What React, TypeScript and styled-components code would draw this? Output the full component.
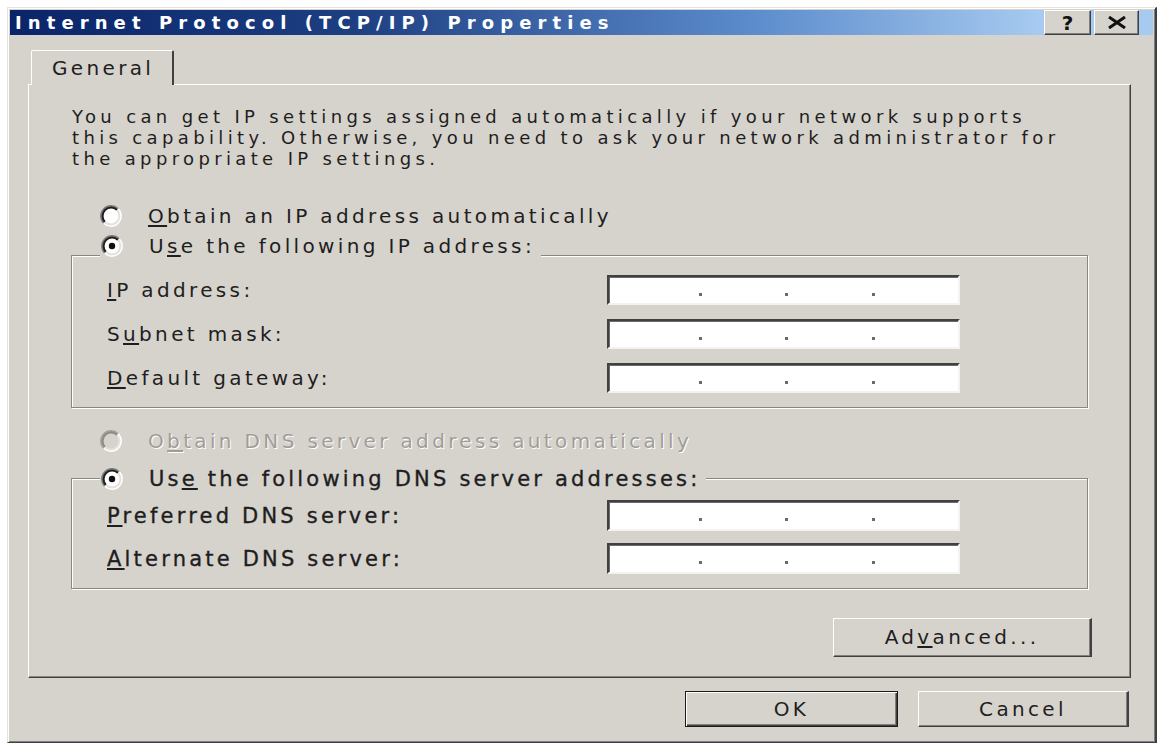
import styled, { createGlobalStyle, css } from "styled-components";

const face = "#d6d3cd";
const ink = "#1e1e1e";

const GlobalStyle = createGlobalStyle`
  html, body {
    margin: 0;
    padding: 0;
    background: #ffffff;
  }
  body {
    font-family: "DejaVu Sans", Verdana, sans-serif;
    color: ${ink};
  }
  #root {
    width: 1160px;
    height: 748px;
    overflow: hidden;
  }
`;

const textSize = (big?: boolean) => css`
  font-size: ${big ? 21 : 20}px;
  letter-spacing: ${big ? 3.2 : 3.35}px;
  line-height: ${big ? 20 : 19}px;
  ${big && "-webkit-text-stroke: 0.35px #1e1e1e;"}
`;

const Radio = ({ checked, disabled }: { checked?: boolean; disabled?: boolean }) => (
  <svg width="22" height="22" viewBox="0 0 22 22" style={{ flex: "none" }}>
    <circle cx="11" cy="11" r="8.5" fill={disabled ? face : "#ffffff"} />
    <path d="M3.93 18.07 A10 10 0 0 1 18.07 3.93" stroke={disabled ? "#a3a09b" : "#7a7a7a"} strokeWidth="2" fill="none" />
    <path d="M4.99 17.01 A8.5 8.5 0 0 1 17.01 4.99" stroke={disabled ? "#8f8c87" : "#202020"} strokeWidth="2" fill="none" />
    <path d="M18.07 3.93 A10 10 0 0 1 3.93 18.07" stroke="#ffffff" strokeWidth="2" fill="none" />
    <path d="M17.01 4.99 A8.5 8.5 0 0 1 4.99 17.01" stroke="#e4e1dc" strokeWidth="2" fill="none" />
    {checked && <circle cx="11" cy="11" r="3.2" fill="#101010" />}
  </svg>
);

const Address = ({ h }: { h: number }) => (
  <IpBox $h={h}>
    <IpPart />
    <IpDot />
    <IpPart />
    <IpDot />
    <IpPart />
    <IpDot />
    <IpPart />
  </IpBox>
);

export default function App() {
  return (
    <>
      <GlobalStyle />
      <Window>
        <TitleBar>
          <Caption>Internet Protocol (TCP/IP) Properties</Caption>
          <TitleButtons>
            <TitleButton $w={47}>?</TitleButton>
            <TitleButton $w={45}>
              <svg width="22" height="13" viewBox="0 0 22 13">
                <path d="M3 1 L19 12 M19 1 L3 12" stroke="#111" strokeWidth="3" />
              </svg>
            </TitleButton>
          </TitleButtons>
        </TitleBar>

        <Body>
          <TabStrip>
            <Tab>General</Tab>
          </TabStrip>

          <Panel>
            <Intro>
              You can get IP settings assigned automatically if your network supports
              <br />
              this capability. Otherwise, you need to ask your network administrator for
              <br />
              the appropriate IP settings.
            </Intro>

            <RadioRow $top={36}>
              <Radio />
              <RadioText>
                <Key>O</Key>btain an IP address automatically
              </RadioText>
            </RadioRow>

            <Group $top={28}>
              <GroupHead $lift={21} $cover={2}>
                <Radio checked />
                <RadioText>
                  U<Key>s</Key>e the following IP address:
                </RadioText>
              </GroupHead>
              <Fields $top={16} $gap={14}>
                <FieldRow>
                  <FieldLabel>
                    <Key>I</Key>P address:
                  </FieldLabel>
                  <Address h={30} />
                </FieldRow>
                <FieldRow>
                  <FieldLabel>
                    S<Key>u</Key>bnet mask:
                  </FieldLabel>
                  <Address h={30} />
                </FieldRow>
                <FieldRow>
                  <FieldLabel>
                    <Key>D</Key>efault gateway:
                  </FieldLabel>
                  <Address h={30} />
                </FieldRow>
              </Fields>
            </Group>

            <RadioRow $top={22}>
              <Radio disabled />
              <RadioText $disabled>
                O<Key>b</Key>tain DNS server address automatically
              </RadioText>
            </RadioRow>

            <Group $top={26}>
              <GroupHead $lift={11} $cover={0}>
                <Radio checked />
                <RadioText $big>
                  Us<Key>e</Key> the following DNS server addresses:
                </RadioText>
              </GroupHead>
              <Fields $top={10} $gap={12}>
                <FieldRow>
                  <FieldLabel $big>
                    <Key>P</Key>referred DNS server:
                  </FieldLabel>
                  <Address h={31} />
                </FieldRow>
                <FieldRow>
                  <FieldLabel $big>
                    <Key>A</Key>lternate DNS server:
                  </FieldLabel>
                  <Address h={31} />
                </FieldRow>
              </Fields>
            </Group>

            <ActionRow>
              <PushButton $w={259} $h={39}>
                Ad<Key>v</Key>anced...
              </PushButton>
            </ActionRow>
          </Panel>

          <Footer>
            <PushButton $w={213} $h={36} $default>
              OK
            </PushButton>
            <PushButton $w={211} $h={36}>
              Cancel
            </PushButton>
          </Footer>
        </Body>
      </Window>
    </>
  );
}

const Window = styled.div`
  width: 1150px;
  margin: 7px 0 0 7px;
  box-sizing: border-box;
  padding: 2px;
  background: ${face};
  border: 1px solid;
  border-color: #e6e3de #404040 #404040 #e6e3de;
  border-right-width: 2px;
  box-shadow: inset 1px 1px #ffffff, inset -1px -1px #808080;
  display: flex;
  flex-direction: column;
`;

const TitleBar = styled.div`
  height: 25px;
  display: flex;
  align-items: center;
  justify-content: space-between;
  padding: 0 14px 0 5px;
  background: linear-gradient(to right, #0a246a 0%, #1d3f82 30%, #5c8ccc 65%, #a6caf0 90%);
`;

const Caption = styled.div`
  color: #ffffff;
  font-weight: bold;
  font-size: 18px;
  letter-spacing: 6.1px;
  line-height: 25px;
  white-space: nowrap;
`;

const TitleButtons = styled.div`
  display: flex;
  gap: 3px;
  height: 25px;
`;

const TitleButton = styled.div<{ $w: number }>`
  width: ${(p) => p.$w}px;
  height: 25px;
  box-sizing: border-box;
  display: flex;
  align-items: center;
  justify-content: center;
  background: ${face};
  border: 1px solid;
  border-color: #ffffff #404040 #404040 #ffffff;
  box-shadow: inset -1px -1px #808080;
  color: #111;
  font-weight: bold;
  font-size: 20px;
  line-height: 20px;
`;

const Body = styled.div`
  display: flex;
  flex-direction: column;
  padding: 15px 22px 13px 18px;
`;

const TabStrip = styled.div`
  display: flex;
  padding-left: 3px;
`;

const Tab = styled.div`
  width: 143px;
  height: 35px;
  box-sizing: border-box;
  margin-bottom: -1px;
  display: flex;
  align-items: center;
  padding-left: 20px;
  background: ${face};
  border-top: 1px solid #ffffff;
  border-left: 1px solid #ffffff;
  border-right: 2px solid #404040;
  border-radius: 2px 2px 0 0;
  position: relative;
  z-index: 1;
  ${textSize()}
`;

const Panel = styled.div`
  display: flex;
  flex-direction: column;
  padding: 21px 42px 20px 42px;
  border: 1px solid;
  border-color: #ffffff #404040 #404040 #ffffff;
  box-shadow: inset -1px -1px #8a8782;
`;

const Intro = styled.p`
  margin: 0 0 0 1px;
  white-space: nowrap;
  font-size: 18px;
  letter-spacing: 4.36px;
  line-height: 21px;
`;

const RadioRow = styled.div<{ $top: number }>`
  display: flex;
  align-items: center;
  gap: 26px;
  height: 22px;
  margin: ${(p) => p.$top}px 0 0 29px;
`;

const RadioText = styled.span<{ $big?: boolean; $disabled?: boolean }>`
  white-space: nowrap;
  ${(p) => textSize(p.$big)}
  ${(p) =>
    p.$disabled &&
    css`
      color: #a09d98;
      text-shadow: 1px 1px #ffffff;
    `}
`;

const Key = styled.span`
  text-decoration: underline;
  text-underline-offset: 2px;
`;

const Group = styled.div<{ $top: number }>`
  margin-top: ${(p) => p.$top}px;
  border: 1px solid #8a8782;
  box-shadow: inset 1px 1px #ffffff, 1px 1px #ffffff;
  padding-bottom: 14px;
`;

const GroupHead = styled.div<{ $lift: number; $cover: number }>`
  display: flex;
  align-items: center;
  gap: 26px;
  width: fit-content;
  height: 22px;
  margin: -${(p) => p.$lift}px 0 0 28px;
  padding: 0 6px ${(p) => p.$cover}px 1px;
  background: ${face};
`;

const Fields = styled.div<{ $top: number; $gap: number }>`
  display: flex;
  flex-direction: column;
  gap: ${(p) => p.$gap}px;
  margin-top: ${(p) => p.$top}px;
  padding-left: 35px;
`;

const FieldRow = styled.div`
  display: grid;
  grid-template-columns: 500px 353px;
  align-items: center;
`;

const FieldLabel = styled.span<{ $big?: boolean }>`
  white-space: nowrap;
  ${(p) => textSize(p.$big)}
`;

const IpBox = styled.div<{ $h: number }>`
  height: ${(p) => p.$h}px;
  box-sizing: border-box;
  display: flex;
  align-items: center;
  padding-left: 6px;
  background: #ffffff;
  border: 2px solid;
  border-color: #404040 #f4f3f1 #f4f3f1 #404040;
  box-shadow: inset 1px 1px #6a6a6a;
`;

const IpPart = styled.div`
  flex: 1;
`;

const IpDot = styled.div`
  width: 3px;
  height: 3px;
  margin-top: 8px;
  background: #6a6a6a;
`;

const ActionRow = styled.div`
  display: flex;
  justify-content: flex-end;
  margin: 29px -4px 0 0;
`;

const PushButton = styled.div<{ $w: number; $h: number; $default?: boolean }>`
  width: ${(p) => p.$w}px;
  height: ${(p) => p.$h}px;
  box-sizing: border-box;
  display: flex;
  align-items: center;
  justify-content: center;
  background: ${face};
  white-space: nowrap;
  ${textSize()}
  ${(p) =>
    p.$default
      ? css`
          border: 1px solid #1a1a1a;
          box-shadow: inset 1px 1px #ffffff, inset -1px -1px #404040, inset -2px -2px #808080;
        `
      : css`
          border: 1px solid;
          border-color: #ffffff #404040 #404040 #ffffff;
          border-right-width: 2px;
          box-shadow: inset -1px -1px #808080;
        `}
`;

const Footer = styled.div`
  display: flex;
  justify-content: flex-end;
  gap: 20px;
  margin: 13px 2px 0 0;
`;
